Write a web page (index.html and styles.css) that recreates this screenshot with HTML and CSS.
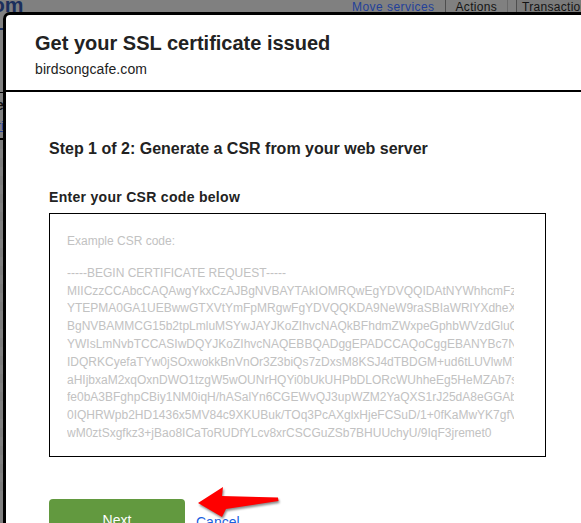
FILE: index.html
```html
<!DOCTYPE html>
<html lang="en">
<head>
    <meta charset="UTF-8">
    <title>Get your SSL certificate issued</title>
    <link rel="stylesheet" href="styles.css">
</head>
<body>
    <div class="backdrop">
        <div class="topbar">
            <span class="brand">om</span>
            <nav class="topnav">
                <a class="move" href="#">Move services</a>
                <span class="tab">Actions</span>
                <span class="tab">Transactions</span>
            </nav>
        </div>
        <div class="sidebar">
            <div class="side-rule"></div>
            <div class="side-line"></div>
            <div class="side-head">e</div>
            <a class="side-link" href="#">ri</a>
            <div class="side-sep"></div>
            <ul class="side-rows">
                <li></li><li></li><li></li><li></li><li></li><li></li><li></li><li></li><li></li><li></li><li></li><li></li><li></li><li></li><li></li><li></li><li></li><li></li><li></li><li></li>
            </ul>
        </div>
    </div>

    <div class="modal">
        <div class="modal-head">
            <h1>Get your SSL certificate issued</h1>
            <p class="domain">birdsongcafe.com</p>
        </div>
        <div class="modal-body">
            <h2>Step 1 of 2: Generate a CSR from your web server</h2>
            <h3>Enter your CSR code below</h3>
            <div class="csr-box">
                <div class="csr">
                    <div class="csr-label">Example CSR code:</div>
<pre class="csr-text">-----BEGIN CERTIFICATE REQUEST-----
MIICzzCCAbcCAQAwgYkxCzAJBgNVBAYTAkIOMRQwEgYDVQQIDAtNYWhhcmFzaHRyYTEP
YTEPMA0GA1UEBwwGTXVtYmFpMRgwFgYDVQQKDA9NeW9raSBIaWRlYXdheXMxFjAU
BgNVBAMMCG15b2tpLmluMSYwJAYJKoZIhvcNAQkBFhdmZWxpeGphbWVzdGluQGdt
YWIsLmNvbTCCASIwDQYJKoZIhvcNAQEBBQADggEPADCCAQoCggEBANYBc7NqZ4
IDQRKCyefaTYw0jSOxwokkBnVnOr3Z3biQs7zDxsM8KSJ4dTBDGM+ud6tLUVlwM7aQ
aHIjbxaM2xqOxnDWO1tzgW5wOUNrHQYi0bUkUHPbDLORcWUhheEg5HeMZAb7sQ
fe0bA3BFghpCBiy1NM0iqH/hASalYn6CGEWvQJ3upWZM2YaQXS1rJ25dA8eGGAbFk
0IQHRWpb2HD1436x5MV84c9XKUBuk/TOq3PcAXglxHjeFCSuD/1+0fKaMwYK7gfVx
wM0ztSxgfkz3+jBao8ICaToRUDfYLcv8xrCSCGuZSb7BHUUchyU/9IqF3jremet0</pre>
                </div>
            </div>
            <div class="actions">
                <button class="btn-next" type="button">Next</button>
                <a class="cancel" href="#">Cancel</a>
            </div>
        </div>
    </div>

    <svg class="pointer" width="100" height="45" viewBox="0 0 100 45">
        <polygon points="8,23 33,7 32,16 88,17.5 88.5,21 36,29 32,37" fill="#ff0000"/>
    </svg>
</body>
</html>
```

FILE: styles.css
```css
body { margin: 0; background: #808080; font-family: "Liberation Sans", Arial, sans-serif; color: #222; overflow: hidden; height: 523px; }

/* page behind the overlay */
.backdrop { height: 523px; }
.topbar { display: flex; align-items: flex-start; height: 13px; overflow: hidden; }
.brand { font-size: 21px; font-weight: 700; line-height: 17px; margin-top: -4px; margin-left: -8px; color: #1b2f5c; width: 30px; flex: none; }
.topnav { display: flex; margin-left: 330px; font-size: 12px; line-height: 12px; padding-top: 1px; white-space: nowrap; flex: none; }
.move { color: #23409a; text-decoration: underline; margin-right: 10px; letter-spacing: 0.45px; }
.tab { color: #141414; padding: 0 10px; border-left: 1px solid #4e4e4e; border-right: 1px solid #6a6a6a; height: 13px; margin-top: -1px; padding-top: 1px; letter-spacing: 0.3px; }
.tab + .tab { margin-left: 8px; padding-left: 5px; background: #7b7b7b; }

.sidebar { width: 4px; overflow: hidden; }
.side-rule { height: 2px; background: #1b2f5c; margin-top: 15px; }
.side-line { height: 1px; background: #000; margin-top: 62px; width: 60px; }
.side-head { font-size: 14px; font-weight: 700; color: #111; margin: 4px 0 0 -4px; line-height: 16px; }
.side-link { display: block; font-size: 12px; color: #23409a; margin: 6px 0 0 -3px; line-height: 14px; }
.side-sep { height: 2px; background: #000; margin-top: 5px; }
.side-rows { list-style: none; margin: 0; padding: 0; }
.side-rows li { height: 9px; background: #7c7c7c; margin-bottom: 9px; }

/* dialog */
.modal { position: absolute; left: 3px; top: 12px; width: 640px; height: 560px; background: #fff; border: 3px solid #000; border-radius: 7px 7px 0 0; }
.modal-head { padding: 17px 0 13px 29px; border-bottom: 2px solid #000; }
.modal-head h1 { font-size: 20px; line-height: 23px; margin: 0; font-weight: 700; color: #222; }
.domain { font-size: 14px; line-height: 16px; margin: 6px 0 0; color: #222; letter-spacing: 0.1px; }

.modal-body { padding: 48px 0 0 43px; }
.modal-body h2 { font-size: 16px; line-height: 18px; margin: 0; font-weight: 700; color: #222; }
.modal-body h3 { font-size: 14px; line-height: 16px; margin: 31px 0 0; font-weight: 700; color: #222; letter-spacing: 0.3px; }

.csr-box { box-sizing: border-box; width: 497px; height: 244px; margin-top: 8px; border: 1px solid #000; padding: 19px 31px 0 17px; }
.csr { overflow: hidden; color: #c2c2c2; font-size: 12px; line-height: 17.8px; }
.csr-label { margin-bottom: 14px; }
.csr-text { margin: 0; font-family: inherit; font-size: 12px; line-height: 17.8px; white-space: pre; }

.actions { display: flex; align-items: flex-start; gap: 11px; margin-top: 42px; }
.btn-next { width: 136px; background: #62993f; color: #fff; border: 0; border-radius: 4px; font-family: inherit; font-size: 14px; line-height: 20px; padding: 11px 0; }
.cancel { color: #1a5fe0; font-size: 14px; line-height: 20px; margin-top: 13px; }

.pointer { position: absolute; left: 190px; top: 480px; filter: drop-shadow(1px 2px 1px rgba(0,0,0,0.45)); }
```
